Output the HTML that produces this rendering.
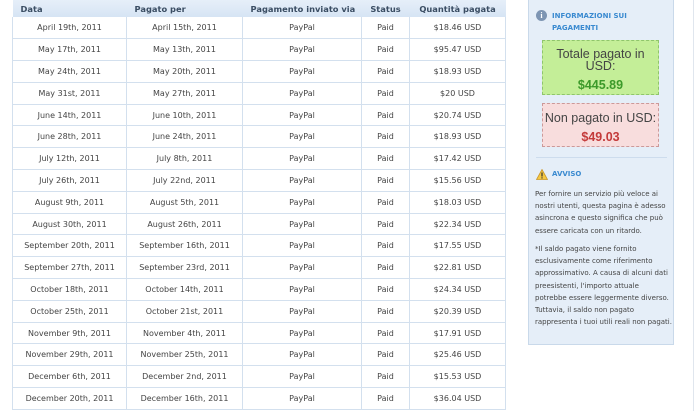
<!DOCTYPE html>
<html><head><meta charset="utf-8"><style>
*{margin:0;padding:0;box-sizing:border-box}
body{width:700px;height:411px;overflow:hidden;background:#fff;font-family:Verdana,"DejaVu Sans",sans-serif;position:relative}
table{position:absolute;left:12px;top:0;width:494px;border-collapse:collapse;font-size:8px;color:#444}
th{height:17px;background:linear-gradient(#e6eff9,#d6e4f4);color:#3a4d63;font-weight:bold;text-align:left;padding-left:8px;font-size:8.3px}
th.c{text-align:center;padding:0}
td{height:21.8px;text-align:center;border:1px solid #d3e0ee;border-top:none}
.side{position:absolute;left:528px;top:-2px;width:146px;height:347px;background:#e5eef8;border:1px solid #c9d9ea}
.frame{position:absolute;left:693px;top:0;width:1px;height:411px;background:#e0e6ee}
.t{position:absolute;font-size:7px;color:#444;line-height:12.2px}
.bx{position:absolute;left:542px;width:117px;text-align:center;font-family:'Liberation Sans',sans-serif;font-size:12.5px;color:#444;line-height:12px;white-space:nowrap}
</style></head><body>
<table>
<tr><th style="width:114px">Data</th><th style="width:116px">Pagato per</th><th style="width:119px">Pagamento inviato via</th><th style="width:48px" class="c">Status</th><th class="c">Quantità pagata</th></tr>
<tr><td>April 19th, 2011</td><td>April 15th, 2011</td><td>PayPal</td><td>Paid</td><td>$18.46 USD</td></tr>
<tr><td>May 17th, 2011</td><td>May 13th, 2011</td><td>PayPal</td><td>Paid</td><td>$95.47 USD</td></tr>
<tr><td>May 24th, 2011</td><td>May 20th, 2011</td><td>PayPal</td><td>Paid</td><td>$18.93 USD</td></tr>
<tr><td>May 31st, 2011</td><td>May 27th, 2011</td><td>PayPal</td><td>Paid</td><td>$20 USD</td></tr>
<tr><td>June 14th, 2011</td><td>June 10th, 2011</td><td>PayPal</td><td>Paid</td><td>$20.74 USD</td></tr>
<tr><td>June 28th, 2011</td><td>June 24th, 2011</td><td>PayPal</td><td>Paid</td><td>$18.93 USD</td></tr>
<tr><td>July 12th, 2011</td><td>July 8th, 2011</td><td>PayPal</td><td>Paid</td><td>$17.42 USD</td></tr>
<tr><td>July 26th, 2011</td><td>July 22nd, 2011</td><td>PayPal</td><td>Paid</td><td>$15.56 USD</td></tr>
<tr><td>August 9th, 2011</td><td>August 5th, 2011</td><td>PayPal</td><td>Paid</td><td>$18.03 USD</td></tr>
<tr><td>August 30th, 2011</td><td>August 26th, 2011</td><td>PayPal</td><td>Paid</td><td>$22.34 USD</td></tr>
<tr><td>September 20th, 2011</td><td>September 16th, 2011</td><td>PayPal</td><td>Paid</td><td>$17.55 USD</td></tr>
<tr><td>September 27th, 2011</td><td>September 23rd, 2011</td><td>PayPal</td><td>Paid</td><td>$22.81 USD</td></tr>
<tr><td>October 18th, 2011</td><td>October 14th, 2011</td><td>PayPal</td><td>Paid</td><td>$24.34 USD</td></tr>
<tr><td>October 25th, 2011</td><td>October 21st, 2011</td><td>PayPal</td><td>Paid</td><td>$20.39 USD</td></tr>
<tr><td>November 9th, 2011</td><td>November 4th, 2011</td><td>PayPal</td><td>Paid</td><td>$17.91 USD</td></tr>
<tr><td>November 29th, 2011</td><td>November 25th, 2011</td><td>PayPal</td><td>Paid</td><td>$25.46 USD</td></tr>
<tr><td>December 6th, 2011</td><td>December 2nd, 2011</td><td>PayPal</td><td>Paid</td><td>$15.53 USD</td></tr>
<tr><td>December 20th, 2011</td><td>December 16th, 2011</td><td>PayPal</td><td>Paid</td><td>$36.04 USD</td></tr>
</table>
<div class="side"></div>
<div class="frame"></div>
<div style="position:absolute;left:536px;top:10px;width:11px;height:11px;border-radius:50%;background:#7d95b3;color:#fff;font-size:8px;font-weight:bold;text-align:center;line-height:11px;font-family:'Liberation Serif',serif">i</div>
<div style="position:absolute;left:552px;top:10px;font-size:7px;font-weight:bold;color:#3a8ad0;line-height:12px">INFORMAZIONI SUI<br>PAGAMENTI</div>
<div class="bx" style="top:40px;height:55px;background:#c4ee98;border:1px dashed #8fc56b;padding-top:7px">Totale pagato in<br>USD:<div style="color:#3c9a2a;font-weight:bold;margin-top:7px">$445.89</div></div>
<div class="bx" style="top:103px;height:44px;background:#f8dddd;border:1px dashed #c99;padding-top:8px">Non pagato in USD:<div style="color:#c43a3a;font-weight:bold;margin-top:7px">$49.03</div></div>
<div style="position:absolute;left:536px;top:157px;width:131px;height:1px;background:#cddced"></div>
<svg style="position:absolute;left:536px;top:169px" width="12" height="11" viewBox="0 0 12 11"><path d="M6 0.5L11.5 10.5H0.5Z" fill="#f5c842" stroke="#c9962a" stroke-width="0.8"/><rect x="5.4" y="3.5" width="1.2" height="4" fill="#333"/><rect x="5.4" y="8.3" width="1.2" height="1.2" fill="#333"/></svg>
<div style="position:absolute;left:552px;top:170px;font-size:7px;font-weight:bold;color:#3a8ad0">AVVISO</div>
<div class="t" style="left:535px;top:188px;width:140px">Per fornire un servizio più veloce ai<br>nostri utenti, questa pagina è adesso<br>asincrona e questo significa che può<br>essere caricata con un ritardo.</div>
<div class="t" style="left:535px;top:243px;width:140px">*Il saldo pagato viene fornito<br>esclusivamente come riferimento<br>approssimativo. A causa di alcuni dati<br>preesistenti, l'importo attuale<br>potrebbe essere leggermente diverso.<br>Tuttavia, il saldo non pagato<br>rappresenta i tuoi utili reali non pagati.</div>
</body></html>
